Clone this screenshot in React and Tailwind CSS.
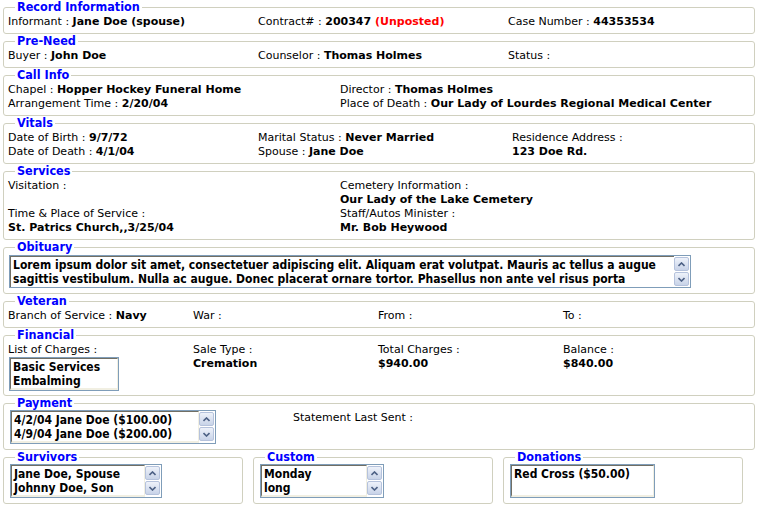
import React from 'react';

function Box({ title, className = '', pad = 'pt-[1px] pb-[4px]', children }) {
  return (
    <fieldset className={`border border-[#d0d0bf] rounded-[3px] px-[4px] ${pad} min-w-0 ${className}`}>
      <legend className="ml-[7px] px-[2px] font-['DejaVu_Sans_Condensed','DejaVu_Sans',sans-serif] text-[12.5px] leading-[14px] font-bold text-[#0000ff]">{title}</legend>
      {children}
    </fieldset>
  );
}

function F({ label, value, red }) {
  return (
    <div className="whitespace-nowrap h-[14px]">
      {label} : {value && <b>{value}</b>}
      {red && <b className="text-[#ff0000]"> {red}</b>}
    </div>
  );
}

function Arrow({ up }) {
  return (
    <svg width="7" height="5" viewBox="0 0 7 5">
      <polyline
        points={up ? '0.5,4 3.5,1 6.5,4' : '0.5,1 3.5,4 6.5,1'}
        fill="none"
        stroke="#4d6185"
        strokeWidth="1.6"
      />
    </svg>
  );
}

function ScrollBtns() {
  return (
    <div className="flex flex-col gap-[1px] pt-[1px] pr-[1px]">
      {[true, false].map((up) => (
        <div
          key={String(up)}
          className="w-[15px] h-[14px] flex items-center justify-center rounded-[2px] border border-[#b5c2dc] bg-gradient-to-b from-[#eef2fa] to-[#c8d3e8]"
        >
          <Arrow up={up} />
        </div>
      ))}
    </div>
  );
}

function ListBox({ items, w, scroll = true, h = 'h-[34px]' }) {
  return (
    <div className={`${w} ${h} border border-[#7f9db9] flex bg-white ml-[2px]`}>
      <div className="flex-1 min-w-0 border-t border-l border-[#716f64] border-b-2 border-b-[#f1efe2] border-r border-r-[#f1efe2] pl-[2px] pt-[1px] font-['DejaVu_Sans_Condensed','DejaVu_Sans',sans-serif] font-bold text-[12px] leading-[14px] overflow-hidden">
        {items.map((t, i) => (
          <div key={i} className="whitespace-nowrap">{t}</div>
        ))}
      </div>
      {scroll && <ScrollBtns />}
    </div>
  );
}

export default function App() {
  return (
    <div className="w-[759px] h-[508px] bg-white text-black font-['DejaVu_Sans',sans-serif] text-[11px] leading-[14px] px-[3px] overflow-hidden">
      <Box title="Record Information" className="w-[752px]">
        <div className="grid grid-cols-[250px_250px_1fr]">
          <F label="Informant" value="Jane Doe (spouse)" />
          <F label="Contract#" value="200347" red="(Unposted)" />
          <F label="Case Number" value="44353534" />
        </div>
      </Box>
      <Box title="Pre-Need" className="w-[752px]">
        <div className="grid grid-cols-[250px_250px_1fr]">
          <F label="Buyer" value="John Doe" />
          <F label="Counselor" value="Thomas Holmes" />
          <F label="Status" />
        </div>
      </Box>
      <Box title="Call Info" className="w-[752px]">
        <div className="grid grid-cols-[332px_1fr]">
          <F label="Chapel" value="Hopper Hockey Funeral Home" />
          <F label="Director" value="Thomas Holmes" />
          <F label="Arrangement Time" value="2/20/04" />
          <F label="Place of Death" value="Our Lady of Lourdes Regional Medical Center" />
        </div>
      </Box>
      <Box title="Vitals" className="w-[752px]">
        <div className="grid grid-cols-[250px_254px_1fr]">
          <F label="Date of Birth" value="9/7/72" />
          <F label="Marital Status" value="Never Married" />
          <F label="Residence Address" />
          <F label="Date of Death" value="4/1/04" />
          <F label="Spouse" value="Jane Doe" />
          <div className="h-[14px] font-bold">123 Doe Rd.</div>
        </div>
      </Box>
      <Box title="Services" className="w-[752px]">
        <div className="grid grid-cols-[332px_1fr]">
          <F label="Visitation" />
          <F label="Cemetery Information" />
          <div className="h-[14px]" />
          <div className="h-[14px] font-bold">Our Lady of the Lake Cemetery</div>
          <F label="Time & Place of Service" />
          <F label="Staff/Autos Minister" />
          <div className="h-[14px] font-bold">St. Patrics Church,,3/25/04</div>
          <div className="h-[14px] font-bold">Mr. Bob Heywood</div>
        </div>
      </Box>
      <Box title="Obituary" className="w-[752px]" pad="pb-[5px]">
        <div className="mt-[1px] ml-[1px] w-[682px] h-[33px] border border-[#7f9db9] flex">
          <div className="flex-1 min-w-0 border-t border-l border-[#716f64] pl-[2px] pt-[1px] font-['DejaVu_Sans_Condensed','DejaVu_Sans',sans-serif] font-bold text-[12px] leading-[14px] overflow-hidden">
            <div className="whitespace-nowrap">Lorem ipsum dolor sit amet, consectetuer adipiscing elit. Aliquam erat volutpat. Mauris ac tellus a augue</div>
            <div className="whitespace-nowrap">sagittis vestibulum. Nulla ac augue. Donec placerat ornare tortor. Phasellus non ante vel risus porta</div>
          </div>
          <ScrollBtns />
        </div>
      </Box>
      <Box title="Veteran" className="w-[752px]">
        <div className="grid grid-cols-[185px_185px_185px_1fr]">
          <F label="Branch of Service" value="Navy" />
          <F label="War" />
          <F label="From" />
          <F label="To" />
        </div>
      </Box>
      <Box title="Financial" className="w-[752px]">
        <div className="grid grid-cols-[185px_185px_185px_1fr]">
          <div>
            <F label="List of Charges" />
            <div className="-ml-[1px]">
              <ListBox items={['Basic Services', 'Embalming']} w="w-[110px]" scroll={false} />
            </div>
          </div>
          <div>
            <F label="Sale Type" />
            <div className="font-bold">Cremation</div>
          </div>
          <div>
            <F label="Total Charges" />
            <div className="font-bold">$940.00</div>
          </div>
          <div>
            <F label="Balance" />
            <div className="font-bold">$840.00</div>
          </div>
        </div>
      </Box>
      <Box title="Payment" className="w-[752px]" pad="pb-[5px]">
        <div className="grid grid-cols-[285px_1fr]">
          <ListBox items={['4/2/04 Jane Doe ($100.00)', '4/9/04 Jane Doe ($200.00)']} w="w-[206px]" />
          <div className="pt-[1px]">
            <F label="Statement Last Sent" />
          </div>
        </div>
      </Box>
      <div className="flex gap-[10px]">
        <Box title="Survivors" className="w-[240px]" pad="pb-[5px]">
          <ListBox items={['Jane Doe, Spouse', 'Johnny Doe, Son']} w="w-[152px]" />
        </Box>
        <Box title="Custom" className="w-[240px]" pad="pb-[5px]">
          <ListBox items={['Monday', 'long']} w="w-[124px]" />
        </Box>
        <Box title="Donations" className="w-[240px]" pad="pb-[5px]">
          <ListBox items={['Red Cross ($50.00)']} w="w-[145px]" scroll={false} />
        </Box>
      </div>
    </div>
  );
}
